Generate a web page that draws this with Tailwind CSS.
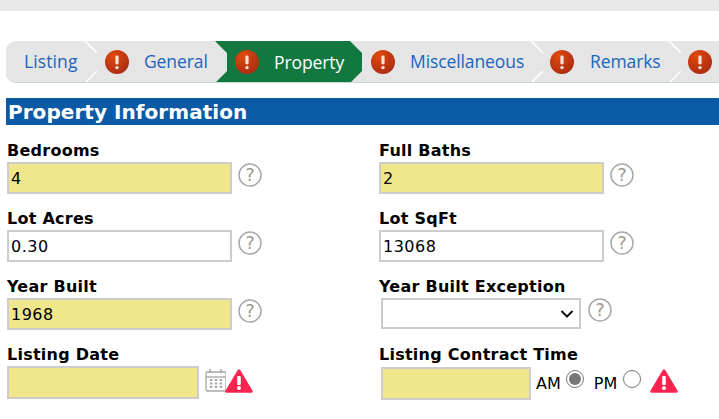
<!DOCTYPE html>
<html lang="en">
<head>
<meta charset="utf-8">
<script src="https://cdn.jsdelivr.net/npm/@tailwindcss/browser@4"></script>
</head>
<body class="bg-white overflow-hidden font-['DejaVu_Sans',sans-serif] text-black">
<div class="w-[719px] h-[419px] overflow-hidden">
  <div class="h-[11px] bg-[#e8e8e8]"></div>

  <nav class="relative mt-[30px] ml-[6px] w-[713px] h-[42px] flex bg-[#e5e5e5] border-b border-[#c6d8d2] rounded-l-[10px] overflow-hidden font-['Open_Sans',sans-serif] text-[17.5px] text-[#1a64bb]">
    <div class="w-[91px] shrink-0 flex items-center pl-[18px] tracking-[0.1px]">Listing</div>
    <div class="w-[118px] shrink-0 flex items-center pl-[8px]">
      <svg width="24" height="24" viewBox="0 0 24 24" class="mr-[15px] shrink-0"><defs><radialGradient id="r" cx="35%" cy="25%" r="85%"><stop offset="0" stop-color="#e0490f"/><stop offset="1" stop-color="#a82a12"/></radialGradient></defs><circle cx="12" cy="12" r="12" fill="url(#r)"/><rect x="10.400" y="5.500" width="3.200" height="9" rx="1.400" fill="#f6e4d8"/><circle cx="12" cy="17.600" r="1.700" fill="#f6e4d8"/></svg>
      <span class="tracking-[-0.100px]">General</span>
    </div>
    <div class="w-[147px] h-[42px] shrink-0 flex items-center pl-[20px] bg-[#13783f] text-white [clip-path:polygon(0_0,135px_0,147px_12px,147px_30px,135px_100%,0_100%,12px_30px,12px_12px)]">
      <svg width="24" height="24" viewBox="0 0 24 24" class="mr-[15px] shrink-0"><circle cx="12" cy="12" r="12" fill="url(#r)"/><rect x="10.400" y="5.500" width="3.200" height="9" rx="1.400" fill="#f6e4d8"/><circle cx="12" cy="17.600" r="1.700" fill="#f6e4d8"/></svg>
      <span class="tracking-[-0.100px]">Property</span>
    </div>
    <div class="w-[181px] shrink-0 flex items-center pl-[9px]">
      <svg width="24" height="24" viewBox="0 0 24 24" class="mr-[15px] shrink-0"><circle cx="12" cy="12" r="12" fill="url(#r)"/><rect x="10.400" y="5.500" width="3.200" height="9" rx="1.400" fill="#f6e4d8"/><circle cx="12" cy="17.600" r="1.700" fill="#f6e4d8"/></svg>
      <span class="tracking-[-0.100px]">Miscellaneous</span>
    </div>
    <div class="w-[138px] shrink-0 flex items-center pl-[7px]">
      <svg width="24" height="24" viewBox="0 0 24 24" class="mr-[16px] shrink-0"><circle cx="12" cy="12" r="12" fill="url(#r)"/><rect x="10.400" y="5.500" width="3.200" height="9" rx="1.400" fill="#f6e4d8"/><circle cx="12" cy="17.600" r="1.700" fill="#f6e4d8"/></svg>
      <span class="tracking-[-0.100px]">Remarks</span>
    </div>
    <div class="flex-1 flex items-center pl-[7px]">
      <svg width="24" height="24" viewBox="0 0 24 24" class="shrink-0"><circle cx="12" cy="12" r="12" fill="url(#r)"/><rect x="10.400" y="5.500" width="3.200" height="9" rx="1.400" fill="#f6e4d8"/><circle cx="12" cy="17.600" r="1.700" fill="#f6e4d8"/></svg>
    </div>
    <svg class="absolute left-[79px] top-0" width="13" height="42" viewBox="0 0 13 42" fill="none" stroke="#fff" stroke-width="1.500"><path d="M0 0l12 12M12 30L0 42"/></svg>
    <svg class="absolute left-[525px] top-0" width="13" height="42" viewBox="0 0 13 42" fill="none" stroke="#fff" stroke-width="1.500"><path d="M0 0l12 12M12 30L0 42"/></svg>
    <svg class="absolute left-[663px] top-0" width="13" height="42" viewBox="0 0 13 42" fill="none" stroke="#fff" stroke-width="1.500"><path d="M0 0l12 12M12 30L0 42"/></svg>
  </nav>

  <h2 class="mt-[15px] ml-[6px] w-[713px] h-[27px] bg-[#0b5aa5] pl-[2px] text-white font-bold text-[20px] leading-[29px] tracking-[0.05px]">Property Information</h2>

  <form class="grid grid-cols-[372px_1fr] pl-[7px] pt-[16px] text-[16px]">
    <div class="h-[68px]">
      <label class="block font-bold leading-[20px] h-[21px] tracking-[0.25px]">Bedrooms</label>
      <div class="flex items-start">
        <input value="4" class="w-[225px] h-[32px] border-2 border-[#ccc] bg-[#f0e68c] px-[2px] text-[16px] tracking-[0.5px] outline-none">
        <svg class="ml-[6px] mt-[1px]" width="24" height="24" viewBox="0 0 24 24" fill="none"><circle cx="12" cy="12" r="11" stroke="#a8a8a8" stroke-width="1.500"/><text x="12" y="18" text-anchor="middle" font-size="18" fill="#a09a90" font-family="DejaVu Sans">?</text></svg>
      </div>
    </div>
    <div class="h-[68px]">
      <label class="block font-bold leading-[20px] h-[21px] tracking-[0.25px]">Full Baths</label>
      <div class="flex items-start">
        <input value="2" class="w-[225px] h-[32px] border-2 border-[#ccc] bg-[#f0e68c] px-[2px] text-[16px] tracking-[0.5px] outline-none">
        <svg class="ml-[6px] mt-[1px]" width="24" height="24" viewBox="0 0 24 24" fill="none"><circle cx="12" cy="12" r="11" stroke="#a8a8a8" stroke-width="1.500"/><text x="12" y="18" text-anchor="middle" font-size="18" fill="#a09a90" font-family="DejaVu Sans">?</text></svg>
      </div>
    </div>
    <div class="h-[68px]">
      <label class="block font-bold leading-[20px] h-[21px] tracking-[0.25px]">Lot Acres</label>
      <div class="flex items-start">
        <input value="0.30" class="w-[225px] h-[32px] border-2 border-[#ccc] bg-white px-[2px] text-[16px] tracking-[0.5px] outline-none">
        <svg class="ml-[6px] mt-[1px]" width="24" height="24" viewBox="0 0 24 24" fill="none"><circle cx="12" cy="12" r="11" stroke="#a8a8a8" stroke-width="1.500"/><text x="12" y="18" text-anchor="middle" font-size="18" fill="#a09a90" font-family="DejaVu Sans">?</text></svg>
      </div>
    </div>
    <div class="h-[68px]">
      <label class="block font-bold leading-[20px] h-[21px] tracking-[0.25px]">Lot SqFt</label>
      <div class="flex items-start">
        <input value="13068" class="w-[225px] h-[32px] border-2 border-[#ccc] bg-white px-[2px] text-[16px] tracking-[0.5px] outline-none">
        <svg class="ml-[6px] mt-[1px]" width="24" height="24" viewBox="0 0 24 24" fill="none"><circle cx="12" cy="12" r="11" stroke="#a8a8a8" stroke-width="1.500"/><text x="12" y="18" text-anchor="middle" font-size="18" fill="#a09a90" font-family="DejaVu Sans">?</text></svg>
      </div>
    </div>
    <div class="h-[68px]">
      <label class="block font-bold leading-[20px] h-[21px] tracking-[0.25px]">Year Built</label>
      <div class="flex items-start">
        <input value="1968" class="w-[225px] h-[32px] border-2 border-[#ccc] bg-[#f0e68c] px-[2px] text-[16px] tracking-[0.5px] outline-none">
        <svg class="ml-[6px] mt-[1px]" width="24" height="24" viewBox="0 0 24 24" fill="none"><circle cx="12" cy="12" r="11" stroke="#a8a8a8" stroke-width="1.500"/><text x="12" y="18" text-anchor="middle" font-size="18" fill="#a09a90" font-family="DejaVu Sans">?</text></svg>
      </div>
    </div>
    <div class="h-[68px]">
      <label class="block font-bold leading-[20px] h-[21px] tracking-[0.25px]">Year Built Exception</label>
      <div class="flex items-start pl-[2px]">
        <div class="w-[200px] h-[31px] border-2 border-[#ccc] bg-white flex items-center justify-end pr-[5px]">
          <svg width="14" height="10" viewBox="0 0 14 10" fill="none" stroke="#111" stroke-width="2"><path d="M1.500 2l5.500 5.500L12.500 2"/></svg>
        </div>
        <svg class="ml-[7px]" width="24" height="24" viewBox="0 0 24 24" fill="none"><circle cx="12" cy="12" r="11" stroke="#a8a8a8" stroke-width="1.500"/><text x="12" y="18" text-anchor="middle" font-size="18" fill="#a09a90" font-family="DejaVu Sans">?</text></svg>
      </div>
    </div>
    <div>
      <label class="block font-bold leading-[20px] h-[21px] tracking-[0.25px]">Listing Date</label>
      <div class="flex items-start">
        <input class="w-[192px] h-[33px] border-2 border-[#ccc] bg-[#f0e68c] outline-none">
        <svg class="ml-[6px] mt-[2px]" width="21" height="24" viewBox="0 0 21 24" fill="none"><rect x="1" y="4" width="20" height="19" rx="1.500" stroke="#a5a5a5" stroke-width="1.300"/><path d="M1 9h20" stroke="#a5a5a5" stroke-width="1.300"/><path d="M5 1v4M16 1v4" stroke="#a5a5a5" stroke-width="1.500"/><path d="M5 12h2.400M9.800 12h2.400M14.600 12h2.400M5 15.500h2.400M9.800 15.500h2.400M14.600 15.500h2.400M5 19h2.400M9.800 19h2.400M14.600 19h2.400" stroke="#a5a5a5" stroke-width="2"/></svg>
        <svg class="mt-[3px] -ml-[1px]" width="28" height="24" viewBox="0 0 28 24"><path d="M14 1.500L26.500 22.500H1.500Z" fill="#fb2450" stroke="#fb2450" stroke-width="2.500" stroke-linejoin="round"/><rect x="12.200" y="7" width="3.600" height="9" rx="1" fill="#fff"/><circle cx="14" cy="19" r="2" fill="#fff"/></svg>
      </div>
    </div>
    <div>
      <label class="block font-bold leading-[20px] h-[21px] tracking-[0.25px]">Listing Contract Time</label>
      <div class="flex items-start pl-[2px]">
        <input class="mt-[1px] w-[150px] h-[33px] border-2 border-[#ccc] bg-[#f0e68c] outline-none">
        <span class="ml-[5px] mt-[8px] text-[16px] leading-[20px]">AM</span>
        <span class="ml-[5px] mt-[4px] w-[18px] h-[18px] rounded-full border border-[#777] flex items-center justify-center"><span class="w-[12px] h-[12px] rounded-full bg-[#777]"></span></span>
        <span class="ml-[10px] mt-[8px] text-[16px] leading-[20px]">PM</span>
        <span class="ml-[6px] mt-[4px] w-[18px] h-[18px] rounded-full border border-[#777] bg-white"></span>
        <svg class="ml-[9px] mt-[3px]" width="28" height="24" viewBox="0 0 28 24"><path d="M14 1.500L26.500 22.500H1.500Z" fill="#fb2450" stroke="#fb2450" stroke-width="2.500" stroke-linejoin="round"/><rect x="12.200" y="7" width="3.600" height="9" rx="1" fill="#fff"/><circle cx="14" cy="19" r="2" fill="#fff"/></svg>
      </div>
    </div>
  </form>
</div>
</body>
</html>
